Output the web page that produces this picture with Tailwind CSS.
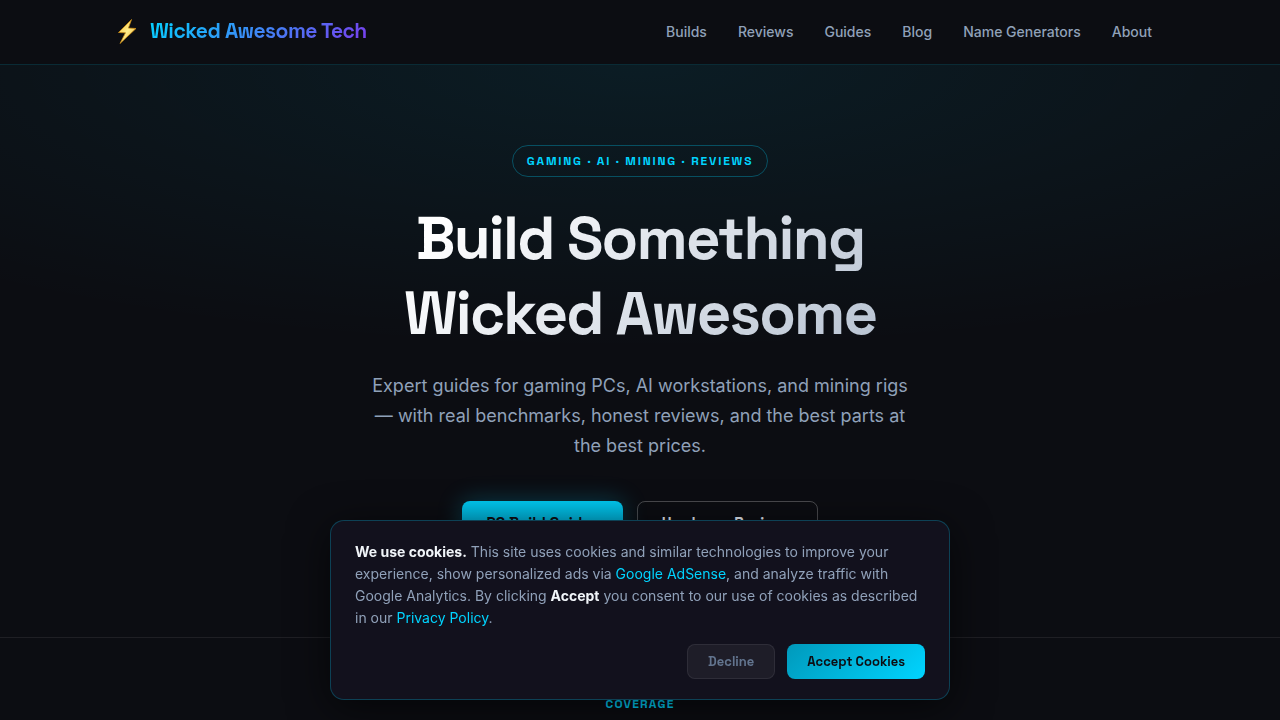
<!DOCTYPE html>
<html lang="en">
<head>
  <meta charset="UTF-8" />
  <meta name="viewport" content="width=device-width, initial-scale=1" />
  <title>Wicked Awesome Tech</title>
  <script src="https://cdn.jsdelivr.net/npm/@tailwindcss/browser@4"></script>
</head>
<body class="bg-[#0c0d12] text-slate-400 font-['Inter',sans-serif] overflow-x-hidden">

  <!-- Header -->
  <header class="border-b border-[#00d4ff]/15 bg-[#0c0d12]">
    <div class="max-w-[1100px] h-16 mx-auto px-6 flex items-center justify-between">
      <a href="#" class="pb-0.5 flex items-center gap-2 text-[21px] font-bold tracking-tight font-['Space_Grotesk','Inter',sans-serif]">
        <svg class="w-7 h-7" viewBox="0 0 28 28" aria-hidden="true">
          <defs>
            <linearGradient id="bolt" x1="0" y1="0" x2="1" y2="1">
              <stop offset="0" stop-color="#f5b82a" />
              <stop offset="0.5" stop-color="#ffee8a" />
              <stop offset="1" stop-color="#e8971a" />
            </linearGradient>
          </defs>
          <path d="M17.5 2.5 4.5 15.5l7 .3L6 26.5 22 11.5l-7.6-.4z" fill="url(#bolt)" stroke="#c98a14" stroke-width="0.8" stroke-linejoin="round" />
        </svg>
        <span class="bg-linear-135/srgb from-[#00d4ff] to-[#7c3aed] bg-clip-text text-transparent">Wicked Awesome Tech</span>
      </a>
      <nav class="flex items-center gap-[3px] text-sm font-medium">
        <a href="#" class="px-3.5 py-2 hover:text-white">Builds</a>
        <a href="#" class="px-3.5 py-2 hover:text-white">Reviews</a>
        <a href="#" class="px-3.5 py-2 hover:text-white">Guides</a>
        <a href="#" class="px-3.5 py-2 hover:text-white">Blog</a>
        <a href="#" class="px-3.5 py-2 hover:text-white">Name Generators</a>
        <a href="#" class="px-3.5 py-2 hover:text-white">About</a>
      </nav>
    </div>
  </header>

  <main>
    <!-- Hero -->
    <section class="px-6 pt-20 pb-23 flex flex-col items-center text-center bg-[radial-gradient(ellipse_80%_50%_at_50%_0%,rgba(0,212,255,0.08),transparent)]">
      <span class="h-8 px-3.5 flex items-center rounded-full border border-[#00d4ff]/30 text-xs font-bold tracking-[0.15em] uppercase text-[#00d4ff] font-['Space_Grotesk','Inter',sans-serif]">Gaming · AI · Mining · Reviews</span>
      <h1 class="mt-6 w-full max-w-[1100px] text-6xl leading-[75px] font-bold tracking-[-0.03em] bg-linear-135/srgb from-white from-30% to-slate-400 bg-clip-text text-transparent font-['Space_Grotesk','Inter',sans-serif]">Build Something<br />Wicked Awesome</h1>
      <p class="mt-5 max-w-[540px] text-lg leading-[30px]">Expert guides for gaming PCs, AI workstations, and mining rigs — with real benchmarks, honest reviews, and the best parts at the best prices.</p>
      <div class="mt-10 flex gap-3.5 text-[15px] font-semibold font-['Space_Grotesk','Inter',sans-serif]">
        <a href="#" class="h-11 px-6 flex items-center rounded-lg bg-linear-to-b/srgb from-[#00c8f0] to-[#0090b3] text-[#0d0d12] shadow-[0_0_24px_rgba(0,212,255,0.25)]">PC Build Guides</a>
        <a href="#" class="h-11 px-6 flex items-center rounded-lg border border-white/25 text-slate-200">Hardware Reviews</a>
      </div>
    </section>

    <!-- Coverage -->
    <section class="px-6 pt-14 border-t border-white/8 text-center">
      <h2 class="text-xs leading-5 font-bold tracking-widest uppercase text-[#00d4ff] font-['Space_Grotesk','Inter',sans-serif]">Coverage</h2>
    </section>
  </main>

  <!-- Cookie banner -->
  <div role="dialog" aria-label="Cookie consent" class="fixed inset-x-4 bottom-5 mx-auto max-w-[620px] px-6 py-5 rounded-[14px] border border-[#00d4ff]/25 bg-[#12111d] shadow-[0_8px_40px_rgba(0,0,0,0.6)]">
    <p class="text-sm leading-[22px]"><strong class="text-slate-100">We use cookies.</strong> This site uses cookies and similar technologies to improve your experience, show personalized ads via <a href="#" class="text-[#00d4ff]">Google AdSense</a>, and analyze traffic with Google Analytics. By clicking <strong class="text-slate-100">Accept</strong> you consent to our use of cookies as described in our <a href="#" class="text-[#00d4ff]">Privacy Policy</a>.</p>
    <div class="mt-[15px] flex justify-end gap-3 text-[13px] font-bold font-['Space_Grotesk','Inter',sans-serif]">
      <button type="button" class="h-[35px] px-5 rounded-lg border border-white/8 bg-white/5 text-slate-500">Decline</button>
      <button type="button" class="h-[35px] px-5 rounded-lg bg-linear-135/srgb from-[#0099bb] to-[#00d4ff] text-[#0d0d12]">Accept Cookies</button>
    </div>
  </div>

</body>
</html>
